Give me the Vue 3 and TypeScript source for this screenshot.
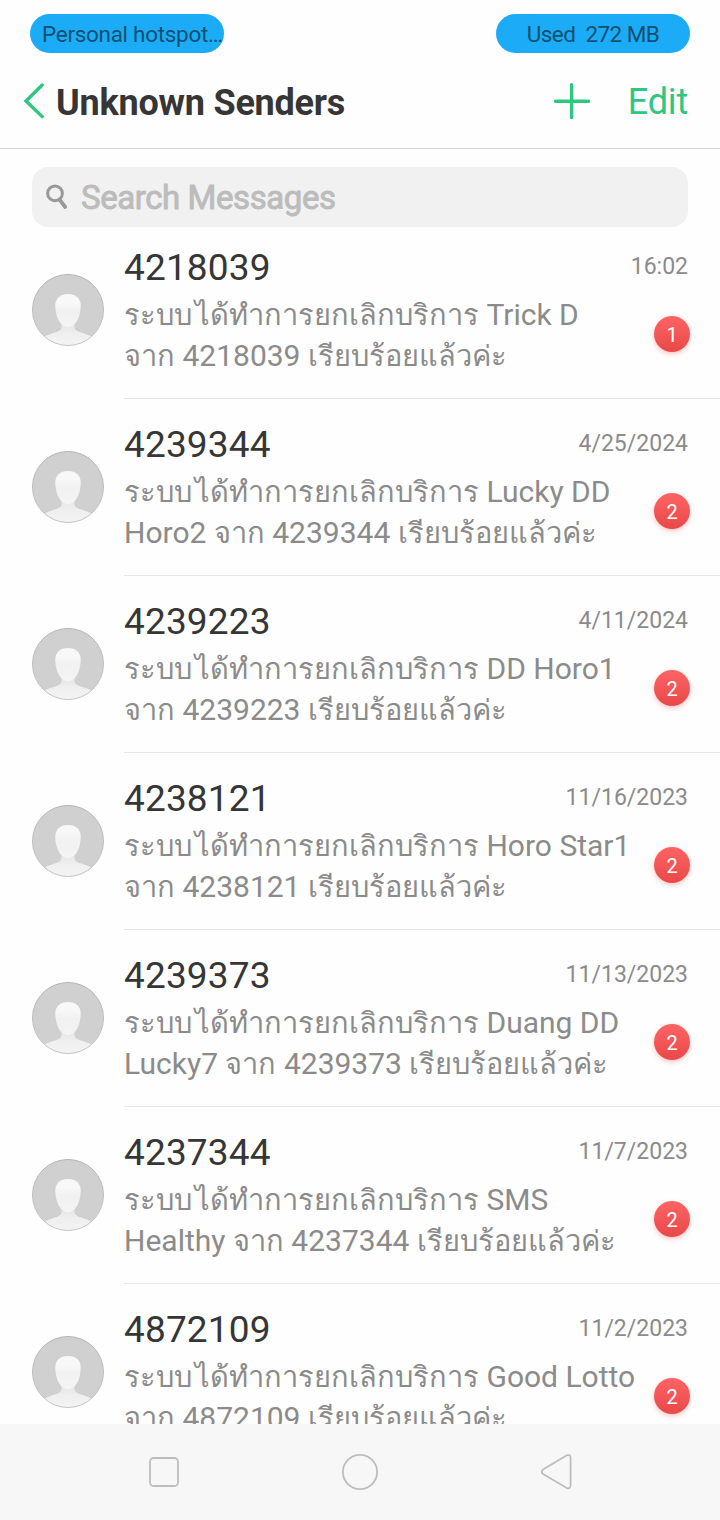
<script setup lang="ts">
interface Run {
  text: string
  kind: 'latin' | 'thai' | 'thai thai-lead'
}

interface Conversation {
  sender: string
  date: string
  unread: number
  lines: Run[][]
}

const SYSTEM = 'ระบบ'
const CANCELLED = 'ได้ทำการยกเลิกบริการ'
const FROM = 'จาก'
const DONE = 'เรียบร้อยแล้วค่ะ'

function conversation(sender: string, date: string, unread: number, first: string, second = ''): Conversation {
  const tail: Run[] = [
    { text: FROM, kind: 'thai' },
    { text: ` ${sender} `, kind: 'latin' },
    { text: DONE, kind: 'thai' },
  ]
  return {
    sender,
    date,
    unread,
    lines: [
      [
        { text: SYSTEM, kind: 'thai thai-lead' },
        { text: CANCELLED, kind: 'thai' },
        { text: ` ${first}`, kind: 'latin' },
      ],
      second ? [{ text: `${second} `, kind: 'latin' }, ...tail] : tail,
    ],
  }
}

const conversations: Conversation[] = [
  conversation('4218039', '16:02', 1, 'Trick D'),
  conversation('4239344', '4/25/2024', 2, 'Lucky DD', 'Horo2'),
  conversation('4239223', '4/11/2024', 2, 'DD Horo1'),
  conversation('4238121', '11/16/2023', 2, 'Horo Star1'),
  conversation('4239373', '11/13/2023', 2, 'Duang DD', 'Lucky7'),
  conversation('4237344', '11/7/2023', 2, 'SMS', 'Healthy'),
  conversation('4872109', '11/2/2023', 2, 'Good Lotto'),
]
</script>

<template>
  <div class="screen">
    <div class="status">
      <div class="pill pill-left">Personal hotspot…</div>
      <div class="pill pill-right">Used&nbsp; 272 MB</div>
    </div>

    <header class="header">
      <svg class="back" width="22" height="36" viewBox="0 0 22 36">
        <path d="M19.2 2 L3 18 L19.2 33.6" fill="none" stroke="#2ec780" stroke-width="3.4" stroke-linecap="round" stroke-linejoin="miter" />
      </svg>
      <h1 class="title">Unknown Senders</h1>
      <svg class="add" width="36" height="36" viewBox="0 0 36 36">
        <path d="M1.6 18.3 H34.4 M17.6 1.8 V34.6" fill="none" stroke="#2ec780" stroke-width="3.4" stroke-linecap="round" />
      </svg>
      <span class="edit">Edit</span>
    </header>

    <main class="content">
      <div class="search">
        <svg class="lens" width="24" height="26" viewBox="0 0 24 26">
          <circle cx="9" cy="9.3" r="7.4" fill="none" stroke="#999" stroke-width="3" />
          <path d="M13.6 15.6 L19.2 23" stroke="#999" stroke-width="3.8" stroke-linecap="round" />
        </svg>
        <span class="placeholder">Search Messages</span>
      </div>

      <div class="list">
        <article v-for="c in conversations" :key="c.sender" class="row">
          <svg class="avatar" width="72" height="72" viewBox="0 0 72 72">
            <defs>
              <linearGradient :id="'head' + c.sender" x1="0" y1="0" x2="0" y2="1">
                <stop offset="0" stop-color="#f8f8f8" />
                <stop offset="0.25" stop-color="#f8f8f8" />
                <stop offset="0.5" stop-color="#f1f1f1" />
                <stop offset="1" stop-color="#f4f4f4" />
              </linearGradient>
              <linearGradient :id="'body' + c.sender" x1="0" y1="0" x2="0" y2="1">
                <stop offset="0" stop-color="#e2e2e2" />
                <stop offset="0.5" stop-color="#efefef" />
                <stop offset="1" stop-color="#f4f4f4" />
              </linearGradient>
              <linearGradient :id="'rim' + c.sender" x1="0" y1="0" x2="0" y2="1">
                <stop offset="0" stop-color="#b2b2b2" />
                <stop offset="1" stop-color="#c6c6c6" />
              </linearGradient>
              <clipPath :id="'disc' + c.sender"><circle cx="36" cy="36" r="35.5" /></clipPath>
            </defs>
            <circle cx="36" cy="36" r="35.5" fill="#d0d0d0" />
            <g :clip-path="`url(#disc${c.sender})`">
              <path d="M29.5 46 V53 C29.5 57 25 57.8 20 59.4 C16 60.7 14 61.5 12 63 V73 H60 V63 C58 61.5 56 60.7 52 59.4 C47 57.8 42.5 57 42.5 53 V46 Z" :fill="`url(#body${c.sender})`" />
              <path d="M36 20 C28 20 23.3 24.5 23.3 31.5 C23.3 42 28 53.2 36 53.2 C44 53.2 48.7 42 48.7 31.5 C48.7 24.5 44 20 36 20 Z" :fill="`url(#head${c.sender})`" />
            </g>
            <circle cx="36" cy="36" r="35.5" fill="none" :stroke="`url(#rim${c.sender})`" stroke-width="1" />
          </svg>
          <div class="body">
            <div class="top">
              <span class="sender">{{ c.sender }}</span>
              <time class="date">{{ c.date }}</time>
            </div>
            <div class="bottom">
              <div class="snippet">
                <div v-for="(line, i) in c.lines" :key="i" class="line"><span v-for="(run, j) in line" :key="j" :class="run.kind">{{ run.text }}</span></div>
              </div>
              <span class="badge">{{ c.unread }}</span>
            </div>
          </div>
        </article>
      </div>
    </main>

    <nav class="nav">
      <svg width="36" height="38" viewBox="0 0 36 38">
        <rect x="4" y="5" width="28" height="28" rx="3.5" fill="none" stroke="#bdbdbd" stroke-width="1.8" />
      </svg>
      <svg width="38" height="38" viewBox="0 0 38 38">
        <circle cx="19" cy="19" r="17.1" fill="none" stroke="#bdbdbd" stroke-width="1.8" />
      </svg>
      <svg width="36" height="38" viewBox="0 0 36 38">
        <path d="M28.4 2.5 Q32.6 0.6 32.6 5 V32 Q32.6 36.6 28.4 34.8 L5 21 Q2.4 18.7 5 16.4 Z" fill="none" stroke="#bdbdbd" stroke-width="1.8" stroke-linejoin="round" />
      </svg>
    </nav>
  </div>
</template>

<style>
body {
  margin: 0;
  background: #fff;
}
</style>

<style scoped>
.screen {
  display: flex;
  flex-direction: column;
  width: 720px;
  height: 1520px;
  overflow: hidden;
  background: #fefefe;
  font-family: Roboto, "Liberation Sans", sans-serif;
}
.status {
  display: flex;
  justify-content: space-between;
  flex: none;
  height: 53px;
  padding: 14px 30px 0;
  box-sizing: border-box;
}
.pill {
  width: 194px;
  height: 39px;
  border-radius: 20px;
  background: #1cacf7;
  color: #105070;
  font-size: 22.5px;
  line-height: 41px;
  text-align: center;
  white-space: nowrap;
}
.pill-left {
  box-sizing: border-box;
  padding-left: 12px;
  letter-spacing: -0.3px;
  text-align: left;
}
.pill-right {
  letter-spacing: -0.55px;
}
.header {
  display: flex;
  align-items: center;
  flex: none;
  height: 96px;
  box-sizing: border-box;
  padding: 0 32px 0 23px;
  border-bottom: 1px solid #d3d3d3;
}
.back {
  flex: none;
  margin-top: 1px;
}
.title {
  margin: 5px 0 0 11px;
  color: #363636;
  font-size: 36px;
  font-weight: 700;
  letter-spacing: -0.22px;
  line-height: 44px;
  white-space: nowrap;
}
.add {
  margin-left: auto;
  margin-top: 1px;
}
.edit {
  margin: 3px 0 0 38px;
  color: #2ec780;
  font-size: 36px;
  letter-spacing: -0.2px;
  line-height: 44px;
}
.content {
  flex: 1;
  min-height: 0;
  overflow: hidden;
  padding-top: 18px;
}
.search {
  display: flex;
  align-items: center;
  height: 60px;
  margin: 0 32px;
  padding-left: 14px;
  box-sizing: border-box;
  border-radius: 16px;
  background: #f1f1f1;
}
.placeholder {
  margin: 1px 0 0 11px;
  color: #bcbcbc;
  font-size: 33px;
  letter-spacing: -0.42px;
  -webkit-text-stroke: 0.9px #bcbcbc;
}
.list {
  margin-top: -5px;
}
.row {
  display: flex;
  height: 177px;
  padding-left: 32px;
  box-sizing: border-box;
}
.avatar {
  flex: none;
  margin-top: 52px;
}
.body {
  flex: 1;
  margin-left: 20px;
  padding: 24px 30px 0 0;
  border-bottom: 1px solid #e8e8e8;
}
.top {
  display: flex;
  justify-content: space-between;
  height: 48px;
  padding-right: 2px;
}
.sender {
  color: #363636;
  font-size: 37px;
  letter-spacing: 0.15px;
  line-height: 44px;
}
.date {
  color: #8b8b8b;
  font-size: 23px;
  line-height: 42px;
}
.bottom {
  display: flex;
  justify-content: space-between;
}
.snippet {
  color: #8b8b8b;
  font-size: 30px;
}
.line {
  height: 41px;
  line-height: 41px;
  white-space: pre;
}
.thai {
  font-size: 29px;
}
.thai-lead {
  margin-right: 3px;
}
.badge {
  width: 36px;
  height: 36px;
  margin-top: 22px;
  border-radius: 50%;
  background: linear-gradient(#ff6464, #e84848);
  box-shadow: 0 2px 5px rgba(240, 70, 70, 0.3);
  color: #fff;
  font-size: 20px;
  line-height: 38px;
  text-align: center;
}
.nav {
  display: flex;
  justify-content: space-between;
  align-items: center;
  flex: none;
  height: 96px;
  padding: 0 146px;
  box-sizing: border-box;
  background: #f7f7f7;
}
</style>
